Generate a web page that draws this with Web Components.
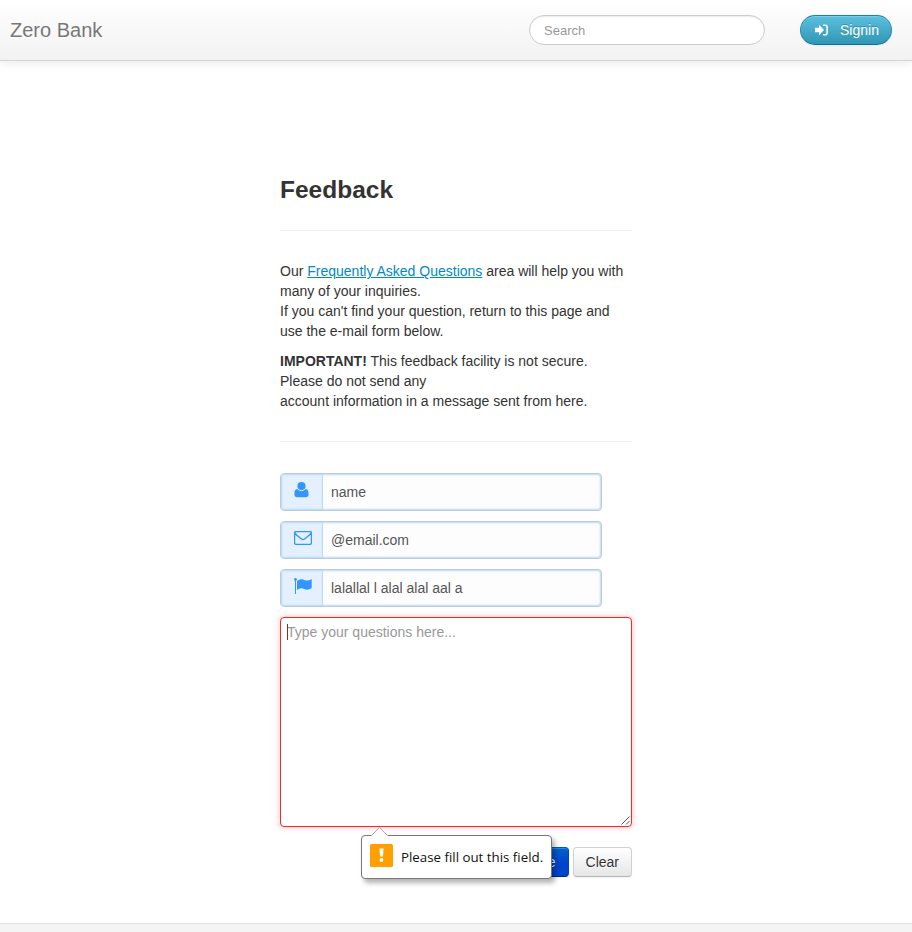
<!DOCTYPE html>
<html lang="en">
<head>
<meta charset="utf-8">
<title>Zero Bank</title>
<style>
html,body{margin:0;height:100%;overflow:hidden}
body{font:14px/20px "Liberation Sans",Arial,sans-serif;color:#333;background:#fff}
</style>
</head>
<body>
<zero-page>
  <zero-navbar slot="header" brand="Zero Bank"></zero-navbar>
  <feedback-panel></feedback-panel>
</zero-page>
<script>
const define = (name, html, setup) => customElements.define(name, class extends HTMLElement {
  connectedCallback() {
    if (this.shadowRoot) return;
    const t = document.createElement('template');
    t.innerHTML = '<style>:host,*{box-sizing:border-box}</style>' + html;
    this.attachShadow({mode: 'open'}).append(t.content.cloneNode(true));
    if (setup) setup(this, this.shadowRoot);
  }
});

const icons = {
  user: '<svg width="15" height="16" viewBox="0 0 15 16"><path fill="currentColor" d="M7.500 0a4.100 4.100 0 0 1 4.100 4.100 4.100 4.100 0 0 1-8.200 0A4.100 4.100 0 0 1 7.500 0zM3.300 6.900C4.600 8.400 6 9 7.500 9S10.400 8.400 11.700 6.900C14.200 7.100 14.600 9.800 14.600 12.400 14.600 14.200 13.500 15.200 12 15.200H3C1.500 15.200 .4 14.200 .4 12.400 .4 9.800 .8 7.100 3.300 6.900z"/></svg>',
  envelope: '<svg width="18" height="15" viewBox="0 -1 18 15"><path fill="none" stroke="currentColor" stroke-width="1.300" stroke-linejoin="round" d="M1.600.65h14.800q1 0 1 1v10.700q0 1-1 1H1.600q-1 0-1-1V1.650q0-1 1-1zM.8 1.700C1.500 4 5 5.700 7.200 7.800Q9 9.400 10.800 7.800C13 5.700 16.500 4 17.200 1.700"/></svg>',
  flag: '<svg width="18" height="16" viewBox="0 0 18 16"><circle cx="1.500" cy="1.500" r="1.400" fill="currentColor"/><path fill="currentColor" d="M1 2h1v14H1zM3 3C5.500 1.300 7.500.8 9.600 1.700 12.200 3 14.500 2.500 17.700.9V10C14.500 12 12.500 12 10.200 10.900 7.500 9.800 5.500 10.500 3 12z"/></svg>',
  signin: '<svg width="13" height="12" viewBox="0 0 13 12"><path fill="currentColor" d="M0 3.700h4V.8L9 6l-5 5.200V8.300H0z"/><path fill="none" stroke="currentColor" stroke-width="1.500" d="M8 1.250h2.300q1.800 0 1.800 1.800v5.900q0 1.800-1.800 1.800H8"/></svg>'
};
define('zero-icon', `<style>:host{display:block;line-height:0}svg{display:block}</style>`,
  (el, root) => root.append(document.createRange().createContextualFragment(icons[el.getAttribute('name')])));

define('zero-page', `<style>
:host{display:flex;flex-direction:column;height:100vh;min-height:932px}
main{flex:1;display:flex;flex-direction:column;align-items:center;padding-top:114px}
footer{height:9px;background:#f4f4f4;border-top:1px solid #e1e1e1}
</style><slot name="header"></slot><main><slot></slot></main><footer></footer>`);

define('zero-navbar', `<style>
:host{display:flex;align-items:center;height:61px;padding:0 20px 0 10px;border-bottom:1px solid #d4d4d4;background:linear-gradient(#fff,#f2f2f2);box-shadow:0 1px 10px rgba(0,0,0,.1)}
.brand{flex:1;font-size:20px;color:#777;text-shadow:0 1px 0 #fff}
.search{width:236px;height:30px;padding:4px 14px;border:1px solid #ccc;border-radius:15px;background:#fff;color:#999;font-size:13px;line-height:21px;box-shadow:inset 0 1px 1px rgba(0,0,0,.075);margin-right:35px}
</style><div class="brand"></div><div class="search" role="searchbox">Search</div>
<zero-button kind="info"><zero-icon slot="icon" name="signin"></zero-icon>Signin</zero-button>`,
  (el, root) => root.querySelector('.brand').textContent = el.getAttribute('brand'));

define('zero-button', `<style>
:host{display:flex;align-items:center;height:30px;padding:0 12px;border:1px solid #ccc;border-color:#d0d0d0 #d0d0d0 #b3b3b3;border-radius:4px;background:linear-gradient(#fff,#e6e6e6);color:#333;text-shadow:0 1px 1px rgba(255,255,255,.75);box-shadow:inset 0 1px 0 rgba(255,255,255,.2),0 1px 2px rgba(0,0,0,.05);white-space:nowrap}
:host([kind=primary]){color:#fff;background:linear-gradient(#0064cd,#0044cc 50%);border-color:#0059b8 #0044b0 #002a80;text-shadow:0 -1px 0 rgba(0,0,0,.25)}
:host([kind=info]){color:#fff;width:92px;padding:0 12px 0 14px;gap:12px;border-radius:15px;background:linear-gradient(#5bc0de,#2f96b4);border-color:#1685ac #2089ad #0e7193;text-shadow:0 -1px 0 rgba(0,0,0,.25)}
</style><slot name="icon"></slot><slot></slot>`);

define('icon-field', `<style>
:host{display:flex;width:322px;height:38px;border:1px solid #bfcad5;border-radius:4px;background:#fdfdfd;box-shadow:inset 0 0 2px 1px #b5dafd;overflow:hidden}
.addon{width:42px;border-right:1px solid #b9dcfb;background:#e4f0fd;color:#3296ff;display:flex;justify-content:center;padding:8px 1px 0 0;box-shadow:inset 2px 0 2px -1px #b5dafd,inset 0 2px 2px -1px #b5dafd,inset 0 -2px 2px -1px #b5dafd}
:host([icon=envelope]) .addon,:host([icon=flag]) .addon{padding-left:3px}
.value{padding:8px;color:#555}
</style><div class="addon"></div><div class="value"><slot></slot></div>`,
  (el, root) => {
    const icon = document.createElement('zero-icon');
    icon.setAttribute('name', el.getAttribute('icon'));
    root.querySelector('.addon').append(icon);
  });

define('message-box', `<style>
:host{display:block;position:relative;height:210px;padding:4px 6px;border:1px solid #f02b2b;border-radius:4px;background:#fff;box-shadow:0 0 6px #ffb8b8;color:#999}
i{position:absolute;left:6px;top:6px;width:1px;height:16px;background:#803030}
svg{position:absolute;right:0;bottom:0}
</style><slot></slot><i></i><svg width="11" height="11" viewBox="0 0 11 11"><path d="M1.500 9.500l8-8M6 9.500l3.500-3.500" stroke="#555" fill="none"/></svg>`);

define('validation-tip', `<style>
:host{position:absolute;left:81px;top:-12px;display:flex;align-items:center;width:191px;height:44px;padding:0 8px;border:1px solid #777;border-radius:4px;background:#fff;box-shadow:3px 4px 5px rgba(0,0,0,.3);color:#111;font:13.300px/20px "Open Sans","Noto Sans",sans-serif;white-space:nowrap}
.arrow{position:absolute;left:9px;top:-9px}
.mark{flex:none;margin:-3px 8px 0 0}
</style><svg class="arrow" width="17" height="10" viewBox="0 0 17 10"><path fill="#fff" d="M0 10V9L8.500.5 17 9v1z"/><path d="M.5 8.500l8-8 8 8" fill="none" stroke="#aaa"/></svg>
<svg class="mark" width="23" height="23" viewBox="0 0 23 23"><rect width="23" height="23" rx="1.500" fill="#ffa000"/><path fill="#fff" d="M9.500 4.500h4l-.5 8h-3z"/><circle cx="11.500" cy="16" r="1.900" fill="#fff"/></svg><span><slot></slot></span>`);

define('feedback-panel', `<style>
:host{display:block;width:352px}
h3{margin:0;font-size:24.5px;line-height:30px}
hr{margin:25px 0 30px;border:0;border-top:1px solid #eee}
p{margin:0 0 10px}
a{color:#0088cc;text-decoration:underline}
hr.second{margin:30px 0 31px}
.fields{display:flex;flex-direction:column;gap:10px}
.actions{position:relative;display:flex;justify-content:flex-end;gap:4px;margin-top:10px}
</style>
<h3>Feedback</h3><hr>
<p>Our <a>Frequently Asked Questions</a> area will help you with many of your inquiries.<br>If you can't find your question, return to this page and use the e-mail form below.</p>
<p><b>IMPORTANT!</b> This feedback facility is not secure. Please do not send any<br>account information in a message sent from here.</p>
<hr class="second">
<div class="fields">
<icon-field icon="user">name</icon-field>
<icon-field icon="envelope">@email.com</icon-field>
<icon-field icon="flag">lalallal l alal alal aal a</icon-field>
<message-box>Type your questions here...</message-box>
<div class="actions"><zero-button kind="primary">Send Message</zero-button><zero-button>Clear</zero-button><validation-tip>Please fill out this field.</validation-tip></div>
</div>`);
</script>
</body>
</html>
